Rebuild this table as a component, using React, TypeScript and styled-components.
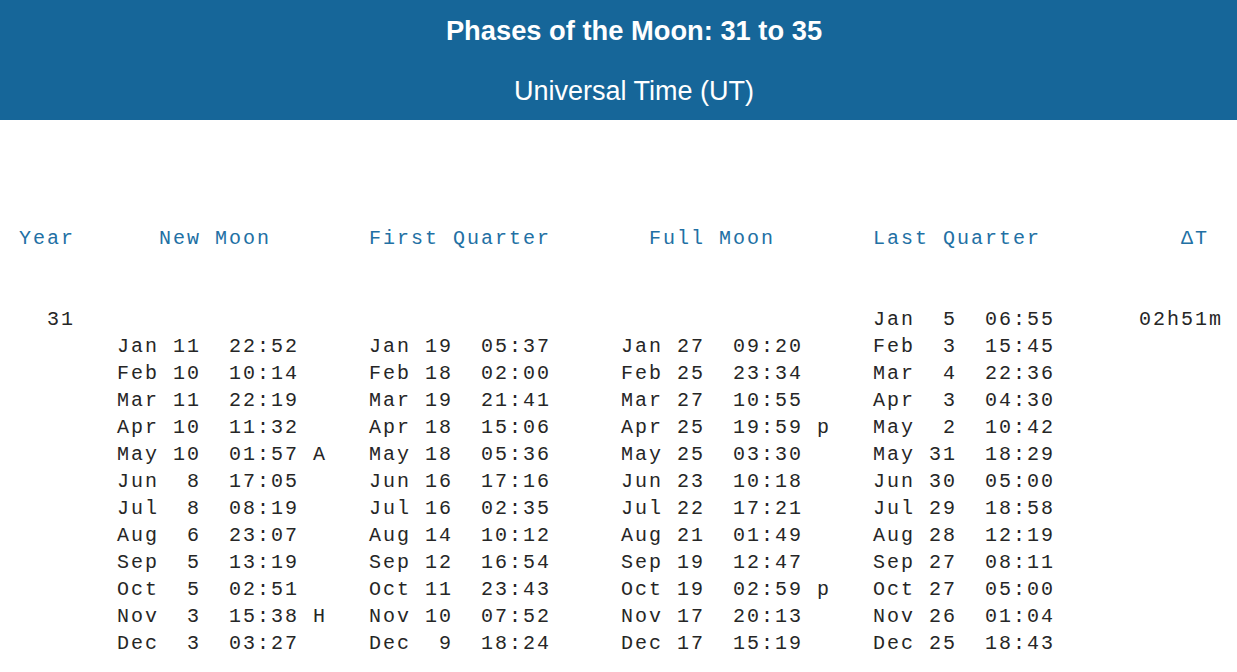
import React from "react";
import styled, { createGlobalStyle } from "styled-components";

const CH = 14;

const GlobalStyle = createGlobalStyle`
  html, body { margin: 0; padding: 0; background: #ffffff; }
  body { font-family: "Liberation Sans", Arial, sans-serif; }
`;

const Banner = styled.header`
  background: #166699;
  height: 120px;
  padding-left: 31px;
  display: flex;
  flex-direction: column;
  align-items: center;
  color: #ffffff;
`;

const Title = styled.h1`
  margin: 0;
  height: 60px;
  line-height: 62px;
  font-size: 27.3px;
  font-weight: 700;
`;

const Subtitle = styled.p`
  margin: 0;
  height: 60px;
  line-height: 62px;
  font-size: 27px;
  font-weight: 400;
`;

const Table = styled.section`
  padding: 105px 0 0 19px;
  font-family: "Liberation Mono", "Courier New", monospace;
  font-size: 20px;
  letter-spacing: 2px;
  line-height: 27px;
`;

const Row = styled.div<{ $head?: boolean }>`
  display: grid;
  grid-template-columns: ${7 * CH}px ${18 * CH}px ${18 * CH}px ${18 * CH}px ${18 * CH}px ${7 * CH}px;
  height: 27px;
  color: ${(p) => (p.$head ? "#2270a4" : "#262626")};
  margin-bottom: ${(p) => (p.$head ? "54px" : "0")};
`;

const Cell = styled.span`
  white-space: pre;
  overflow: visible;
`;

type Ph = [string, number, string, string?];

const newM: Ph[] = [
  ["Jan", 11, "22:52"], ["Feb", 10, "10:14"], ["Mar", 11, "22:19"], ["Apr", 10, "11:32"],
  ["May", 10, "01:57", "A"], ["Jun", 8, "17:05"], ["Jul", 8, "08:19"], ["Aug", 6, "23:07"],
  ["Sep", 5, "13:19"], ["Oct", 5, "02:51"], ["Nov", 3, "15:38", "H"], ["Dec", 3, "03:27"],
];
const firstQ: Ph[] = [
  ["Jan", 19, "05:37"], ["Feb", 18, "02:00"], ["Mar", 19, "21:41"], ["Apr", 18, "15:06"],
  ["May", 18, "05:36"], ["Jun", 16, "17:16"], ["Jul", 16, "02:35"], ["Aug", 14, "10:12"],
  ["Sep", 12, "16:54"], ["Oct", 11, "23:43"], ["Nov", 10, "07:52"], ["Dec", 9, "18:24"],
];
const fullM: Ph[] = [
  ["Jan", 27, "09:20"], ["Feb", 25, "23:34"], ["Mar", 27, "10:55"], ["Apr", 25, "19:59", "p"],
  ["May", 25, "03:30"], ["Jun", 23, "10:18"], ["Jul", 22, "17:21"], ["Aug", 21, "01:49"],
  ["Sep", 19, "12:47"], ["Oct", 19, "02:59", "p"], ["Nov", 17, "20:13"], ["Dec", 17, "15:19"],
];
const lastQ: Ph[] = [
  ["Feb", 3, "15:45"], ["Mar", 4, "22:36"], ["Apr", 3, "04:30"], ["May", 2, "10:42"],
  ["May", 31, "18:29"], ["Jun", 30, "05:00"], ["Jul", 29, "18:58"], ["Aug", 28, "12:19"],
  ["Sep", 27, "08:11"], ["Oct", 27, "05:00"], ["Nov", 26, "01:04"], ["Dec", 25, "18:43"],
];

const fmt = (p?: Ph) => {
  if (!p) return "";
  const [m, d, t, f] = p;
  return `${m} ${String(d).padStart(2, " ")}  ${t}${f ? " " + f : ""}`;
};

export default function App() {
  return (
    <>
      <GlobalStyle />
      <Banner>
        <Title>Phases of the Moon: 31 to 35</Title>
        <Subtitle>Universal Time (UT)</Subtitle>
      </Banner>
      <Table>
        <Row $head>
          <Cell>Year</Cell>
          <Cell>{"   New Moon"}</Cell>
          <Cell>First Quarter</Cell>
          <Cell>{"  Full Moon"}</Cell>
          <Cell>Last Quarter</Cell>
          <Cell>{"    ΔT"}</Cell>
        </Row>
        <Row>
          <Cell>{"  31"}</Cell>
          <Cell />
          <Cell />
          <Cell />
          <Cell>{fmt(["Jan", 5, "06:55"])}</Cell>
          <Cell>{" 02h51m"}</Cell>
        </Row>
        {newM.map((n, i) => (
          <Row key={i}>
            <Cell />
            <Cell>{fmt(n)}</Cell>
            <Cell>{fmt(firstQ[i])}</Cell>
            <Cell>{fmt(fullM[i])}</Cell>
            <Cell>{fmt(lastQ[i])}</Cell>
            <Cell />
          </Row>
        ))}
      </Table>
    </>
  );
}
